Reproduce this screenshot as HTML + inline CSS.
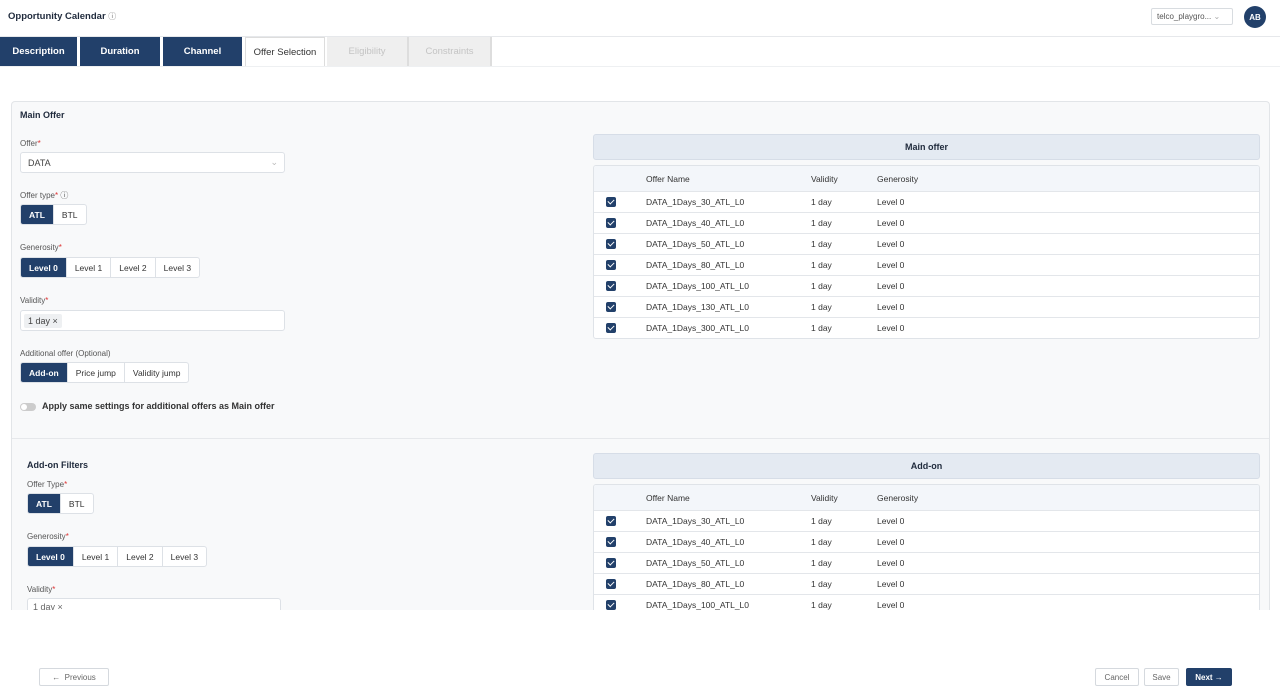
<!DOCTYPE html><html><head><style>
*{box-sizing:border-box;margin:0;padding:0}
body{width:1280px;height:695px;position:relative;background:#fff;font-family:"Liberation Sans",sans-serif;color:#1f2a3c;overflow:hidden;font-size:9px}
.a{position:absolute}
.tab{position:absolute;top:37px;height:29px;display:flex;align-items:center;justify-content:center;font-size:9.5px}
.dk{background:#22406a;color:#fff;font-weight:bold}
.lbl{position:absolute;font-size:8px;color:#555}
.lbl b{color:#d33;font-weight:normal}
.seg{position:absolute;display:flex;border:1px solid #dde1e6;border-radius:3px;background:#fff;height:21px;overflow:hidden}
.seg div{padding:0 8px;display:flex;align-items:center;border-right:1px solid #dde1e6;font-size:8.5px;color:#333}
.seg div:last-child{border-right:none}
.seg .on{background:#22406a;color:#fff;font-weight:bold}
.inp{position:absolute;background:#fff;border:1px solid #dde1e6;border-radius:3px;height:21px;font-size:9px;color:#444;display:flex;align-items:center;padding-left:7px}
.chip{background:#eef0f2;padding:2px 4px;border-radius:2px}
.bar{position:absolute;left:593px;width:667px;height:26px;background:#e4eaf2;border:1px solid #d6dde7;border-radius:3px;font-size:9px;font-weight:bold;display:flex;align-items:center;justify-content:center}
.tbl{position:absolute;left:593px;width:667px;border:1px solid #dfe3e8;border-radius:3px;background:#fff;overflow:hidden}
.tr{height:21px;display:flex;align-items:center;border-top:1px solid #e3e6ea;font-size:8.5px;color:#333;position:relative}
.th{height:25px;background:#f3f6fa;border-top:none}
.tr span{position:absolute}
.cb{left:12px;width:10px;height:10px;background:#22406a;border-radius:2px}
.cb:after{content:"";position:absolute;left:3px;top:1px;width:3px;height:5px;border:solid #fff;border-width:0 1.5px 1.5px 0;transform:rotate(45deg)}
.btn{position:absolute;top:668px;height:18px;border:1px solid #d5d9de;border-radius:2px;font-size:8px;color:#666;display:flex;align-items:center;justify-content:center;background:#fff}
</style></head><body>
<div class="a" style="left:8px;top:11px;font-size:9.5px;font-weight:bold">Opportunity Calendar <span style="font-weight:normal;color:#777;font-size:8px">&#9432;</span></div>
<div class="a" style="left:1151px;top:8px;width:82px;height:17px;border:1px solid #d8dce0;border-radius:2px;font-size:8px;color:#555;padding:3px 5px">telco_playgro... <span style="color:#aaa">&#8964;</span></div>
<div class="a" style="left:1244px;top:6px;width:22px;height:22px;border-radius:50%;background:#22406a;color:#fff;font-size:8px;font-weight:bold;display:flex;align-items:center;justify-content:center">AB</div>
<div class="a" style="left:0;top:36px;width:1280px;height:1px;background:#e6e8eb"></div>
<div class="tab dk" style="left:0;width:77px">Description</div>
<div class="tab dk" style="left:80px;width:80px">Duration</div>
<div class="tab dk" style="left:163px;width:79px">Channel</div>
<div class="tab" style="left:245px;width:80px;background:#fff;border:1px solid #ddd;border-bottom:none;color:#333">Offer Selection</div>
<div class="tab" style="left:327px;width:82px;background:#efefef;color:#c4c4c4;border-right:2px solid #ddd">Eligibility</div>
<div class="tab" style="left:409px;width:83px;background:#efefef;color:#c4c4c4;border-right:2px solid #ddd">Constraints</div>
<div class="a" style="left:0;top:66px;width:1280px;height:1px;background:#eef0f2"></div>
<div class="a" style="left:11px;top:101px;width:1259px;height:509px;background:#f8f9fa;border:1px solid #e2e5e8;border-bottom:none;border-radius:4px 4px 0 0"></div>
<div class="a" style="left:20px;top:110px;font-size:9px;font-weight:bold">Main Offer</div>
<div class="lbl" style="left:20px;top:139px">Offer<b>*</b></div>
<div class="inp" style="left:20px;top:152px;width:265px">DATA<span style="position:absolute;right:6px;color:#bbb">&#8964;</span></div>
<div class="lbl" style="left:20px;top:190px">Offer type<b>*</b> &#9432;</div>
<div class="seg" style="left:20px;top:204px"><div class="on">ATL</div><div>BTL</div></div>
<div class="lbl" style="left:20px;top:243px">Generosity<b>*</b></div>
<div class="seg" style="left:20px;top:257px"><div class="on">Level 0</div><div>Level 1</div><div>Level 2</div><div>Level 3</div></div>
<div class="lbl" style="left:20px;top:296px">Validity<b>*</b></div>
<div class="inp" style="left:20px;top:310px;width:265px;padding-left:3px"><span class="chip">1 day ×</span></div>
<div class="lbl" style="left:20px;top:349px">Additional offer (Optional)</div>
<div class="seg" style="left:20px;top:362px"><div class="on">Add-on</div><div>Price jump</div><div>Validity jump</div></div>
<div class="a" style="left:20px;top:403px;width:16px;height:8px;border-radius:4px;background:#ccc"></div>
<div class="a" style="left:21px;top:404px;width:6px;height:6px;border-radius:50%;background:#fff"></div>
<div class="a" style="left:42px;top:401px;font-size:9px;font-weight:bold;color:#333">Apply same settings for additional offers as Main offer</div>
<div class="a" style="left:12px;top:438px;width:1257px;height:1px;background:#e6e8eb"></div>
<div class="a" style="left:27px;top:460px;font-size:9px;font-weight:bold">Add-on Filters</div>
<div class="lbl" style="left:27px;top:480px">Offer Type<b>*</b></div>
<div class="seg" style="left:27px;top:493px"><div class="on">ATL</div><div>BTL</div></div>
<div class="lbl" style="left:27px;top:532px">Generosity<b>*</b></div>
<div class="seg" style="left:27px;top:546px"><div class="on">Level 0</div><div>Level 1</div><div>Level 2</div><div>Level 3</div></div>
<div class="lbl" style="left:27px;top:585px">Validity<b>*</b></div>
<div class="a" style="left:27px;top:598px;width:254px;height:12px;background:#fff;border:1px solid #dde1e6;border-bottom:none;border-radius:3px 3px 0 0;overflow:hidden;font-size:9px;color:#666;padding:3px 5px">1 day ×</div>

<div class="bar" style="top:134px">Main offer</div>
<div class="tbl" style="top:165px">
<div class="tr th"><span style="left:52px">Offer Name</span><span style="left:217px">Validity</span><span style="left:283px">Generosity</span></div>
<div class="tr"><span class="cb"></span><span style="left:52px">DATA_1Days_30_ATL_L0</span><span style="left:217px">1 day</span><span style="left:283px">Level 0</span></div>
<div class="tr"><span class="cb"></span><span style="left:52px">DATA_1Days_40_ATL_L0</span><span style="left:217px">1 day</span><span style="left:283px">Level 0</span></div>
<div class="tr"><span class="cb"></span><span style="left:52px">DATA_1Days_50_ATL_L0</span><span style="left:217px">1 day</span><span style="left:283px">Level 0</span></div>
<div class="tr"><span class="cb"></span><span style="left:52px">DATA_1Days_80_ATL_L0</span><span style="left:217px">1 day</span><span style="left:283px">Level 0</span></div>
<div class="tr"><span class="cb"></span><span style="left:52px">DATA_1Days_100_ATL_L0</span><span style="left:217px">1 day</span><span style="left:283px">Level 0</span></div>
<div class="tr"><span class="cb"></span><span style="left:52px">DATA_1Days_130_ATL_L0</span><span style="left:217px">1 day</span><span style="left:283px">Level 0</span></div>
<div class="tr"><span class="cb"></span><span style="left:52px">DATA_1Days_300_ATL_L0</span><span style="left:217px">1 day</span><span style="left:283px">Level 0</span></div>
</div>
<div class="bar" style="top:453px">Add-on</div>
<div class="tbl" style="top:484px;height:126px;border-bottom:none;border-radius:3px 3px 0 0">
<div class="tr th"><span style="left:52px">Offer Name</span><span style="left:217px">Validity</span><span style="left:283px">Generosity</span></div>
<div class="tr"><span class="cb"></span><span style="left:52px">DATA_1Days_30_ATL_L0</span><span style="left:217px">1 day</span><span style="left:283px">Level 0</span></div>
<div class="tr"><span class="cb"></span><span style="left:52px">DATA_1Days_40_ATL_L0</span><span style="left:217px">1 day</span><span style="left:283px">Level 0</span></div>
<div class="tr"><span class="cb"></span><span style="left:52px">DATA_1Days_50_ATL_L0</span><span style="left:217px">1 day</span><span style="left:283px">Level 0</span></div>
<div class="tr"><span class="cb"></span><span style="left:52px">DATA_1Days_80_ATL_L0</span><span style="left:217px">1 day</span><span style="left:283px">Level 0</span></div>
<div class="tr"><span class="cb"></span><span style="left:52px">DATA_1Days_100_ATL_L0</span><span style="left:217px">1 day</span><span style="left:283px">Level 0</span></div>
</div>
<div class="btn" style="left:39px;width:70px">&#8592;&nbsp;&nbsp;Previous</div>
<div class="btn" style="left:1095px;width:44px">Cancel</div>
<div class="btn" style="left:1144px;width:35px">Save</div>
<div class="btn" style="left:1186px;width:46px;background:#22406a;color:#fff;font-weight:bold;border-color:#22406a">Next &#8594;</div>
</body></html>
